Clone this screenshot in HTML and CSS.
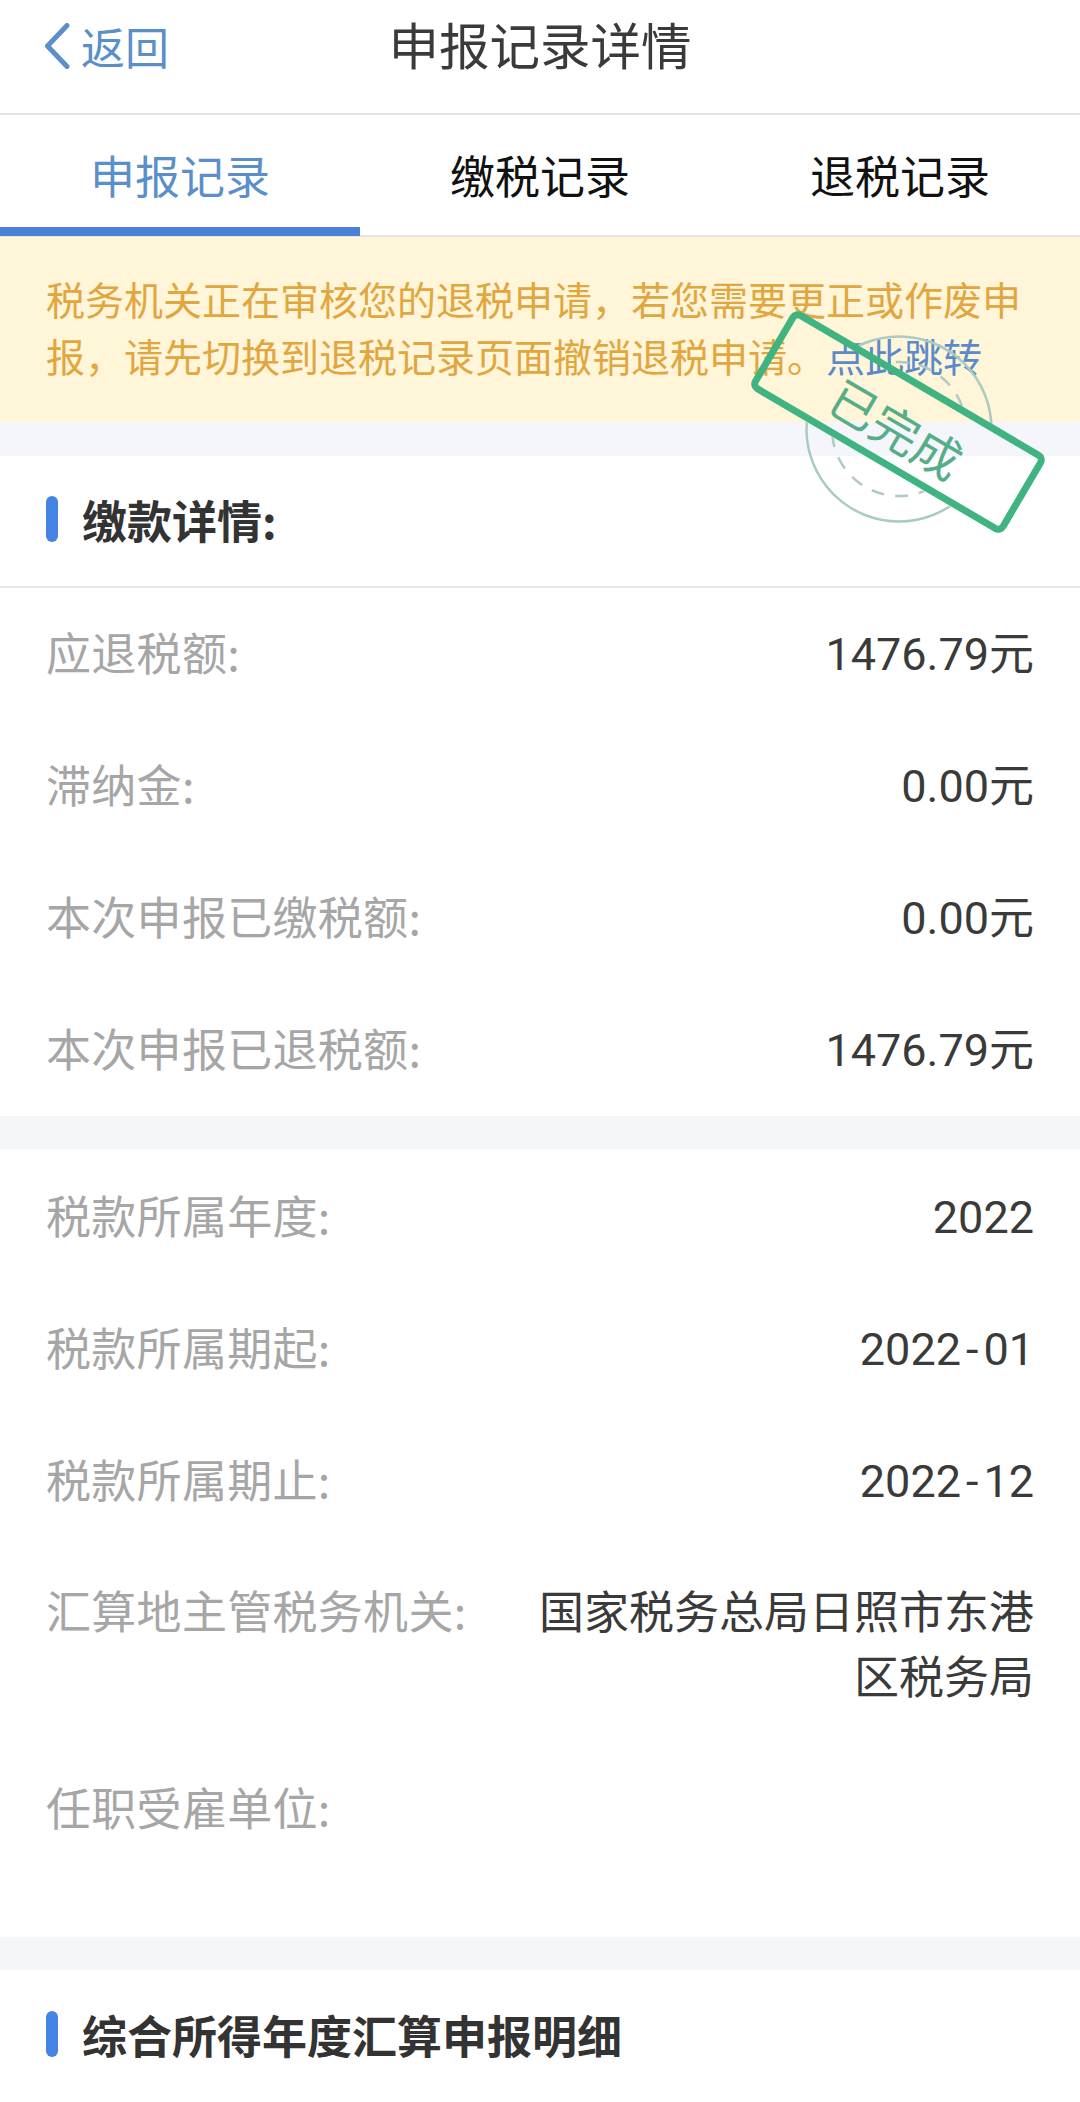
FILE: index.html
```html
<!DOCTYPE html>
<html lang="zh-CN">
<head>
<meta charset="utf-8">
<title>申报记录详情</title>
<link rel="stylesheet" href="styles.css">
</head>
<body>
<div class="page">
  <header class="nav">
    <div class="back">
      <svg class="chev" width="26" height="46" viewBox="0 0 26 46"><path d="M23 2.5 L3.5 23 L23 43.5" fill="none" stroke="#5b8fc9" stroke-width="5" stroke-linecap="round" stroke-linejoin="round"/></svg>
      <span>返回</span>
    </div>
    <h1 class="nav-title">申报记录详情</h1>
  </header>
  <nav class="tabs">
    <div class="tab active">申报记录</div>
    <div class="tab">缴税记录</div>
    <div class="tab">退税记录</div>
  </nav>
  <div class="notice">税务机关正在审核您的退税申请&#xFF0C;若您需要更正或作废申报&#xFF0C;请先切换到退税记录页面撤销退税申请&#x3002;<span class="link">点此跳转</span></div>
  <div class="gap"></div>
  <section class="card">
    <h2 class="head line"><i class="bar"></i>缴款详情:</h2>
    <div class="row"><span class="k">应退税额:</span><span class="v">1476.79元</span></div>
    <div class="row"><span class="k">滞纳金:</span><span class="v">0.00元</span></div>
    <div class="row"><span class="k">本次申报已缴税额:</span><span class="v">0.00元</span></div>
    <div class="row"><span class="k">本次申报已退税额:</span><span class="v">1476.79元</span></div>
  </section>
  <div class="gap gap-b"></div>
  <section class="card group">
    <div class="row"><span class="k">税款所属年度:</span><span class="v">2022</span></div>
    <div class="row"><span class="k">税款所属期起:</span><span class="v">2022<span class="hy">-</span>01</span></div>
    <div class="row"><span class="k">税款所属期止:</span><span class="v">2022<span class="hy">-</span>12</span></div>
    <div class="row multi"><span class="k">汇算地主管税务机关:</span><span class="v wrap">国家税务总局日照市东港区税务局</span></div>
    <div class="row last"><span class="k">任职受雇单位:</span></div>
  </section>
  <div class="gap gap-b"></div>
  <section class="card">
    <h2 class="head"><i class="bar"></i>综合所得年度汇算申报明细</h2>
  </section>
  <div class="stamp">
    <svg class="seal" width="190" height="190" viewBox="0 0 190 190">
      <defs>
        <mask id="seal-cut" maskUnits="userSpaceOnUse" x="0" y="0" width="190" height="190">
          <rect x="0" y="0" width="190" height="190" fill="#fff"/>
          <rect x="-53" y="42.5" width="294" height="92" fill="#000" transform="rotate(30.4 94 88.5)"/>
        </mask>
      </defs>
      <g mask="url(#seal-cut)">
        <circle cx="95" cy="95" r="92.5" fill="none" stroke="#a9cbc0" stroke-width="2.5"/>
        <circle cx="95" cy="95" r="67" fill="none" stroke="#b3c9c3" stroke-width="2.5" stroke-dasharray="13 11"/>
      </g>
    </svg>
    <div class="badge">已完成</div>
  </div>
</div>
</body>
</html>
```
FILE: styles.css
```css
* { box-sizing: border-box; }
html, body { margin: 0; padding: 0; }
body {
  width: 1080px;
  height: 2102px;
  overflow: hidden;
  background: #fff;
  font-family: "Noto Sans CJK SC", "Noto Sans", sans-serif;
  color: #333;
}
.page { position: relative; height: 2102px; overflow: hidden; }

.nav {
  position: relative;
  height: 115px;
  border-bottom: 2px solid #e4e4e4;
  padding: 0 0 27px;
  display: flex;
  align-items: center;
  justify-content: center;
}
.back {
  position: absolute;
  left: 44px;
  top: 22px;
  display: flex;
  align-items: center;
  gap: 11px;
  font-size: 44px;
  line-height: 48px;
  color: #5b8fc9;
}
.nav-title {
  margin: 0;
  font-size: 50.5px;
  font-weight: 400;
  line-height: 66px;
  color: #3a3a3a;
}

.tabs {
  display: grid;
  grid-template-columns: repeat(3, 360px);
  height: 122px;
  border-bottom: 2px solid #e6e4e2;
}
.tab {
  display: flex;
  align-items: center;
  justify-content: center;
  height: 118px;
  font-size: 45px;
  color: #111;
}
.tab.active {
  height: 121px;
  color: #5b8fc9;
  border-bottom: 9px solid #4a80d8;
  padding-top: 6px;
}

.notice {
  height: 185px;
  padding: 33px 46px 0;
  background: #fff5d9;
  font-size: 39px;
  line-height: 57px;
  color: #e2a63e;
}
.link { color: #5a8bc8; }

.gap { height: 34px; background: #f4f6fb; }
.gap-b { height: 33px; background: #f5f6f9; }

.head {
  display: flex;
  align-items: center;
  gap: 24px;
  height: 132px;
  margin: 0;
  padding: 0 0 4px 46px;
  font-size: 45px;
  font-weight: 700;
  color: #333;
}
.head.line { border-bottom: 2px solid #e8e8e8; }
.bar {
  width: 12px;
  height: 46px;
  border-radius: 6px;
  background: #4584e4;
}

.group { padding-top: 2px; padding-bottom: 62px; }
.row {
  display: flex;
  justify-content: space-between;
  align-items: center;
  height: 132px;
  padding: 0 46px 5px;
  font-size: 45px;
  line-height: 65px;
}
.row.multi { height: 196px; align-items: flex-start; padding-top: 30px; }
.k { color: #a6a6a6; flex: none; letter-spacing: 0.3px; }
.v { color: #3a3a3a; padding-top: 5px; font-family: "Roboto", "Noto Sans CJK SC", sans-serif; }
.hy { padding: 0 5px; }
.wrap { width: 500px; padding-top: 0; text-align: right; font-family: "Noto Sans CJK SC", sans-serif; }

.stamp {
  position: absolute;
  left: 745px;
  top: 305px;
  width: 305px;
  height: 235px;
}
.seal { position: absolute; left: 59px; top: 29px; }
.badge {
  position: absolute;
  left: 6px;
  top: 71px;
  width: 294px;
  height: 92px;
  border: 7px solid #3fb481;
  border-radius: 9px;
  transform: rotate(30.4deg);
  display: flex;
  align-items: center;
  justify-content: center;
  padding: 10px 0 0 4px;
  font-size: 48px;
  font-weight: 400;
  color: #55ae88;
}
```
